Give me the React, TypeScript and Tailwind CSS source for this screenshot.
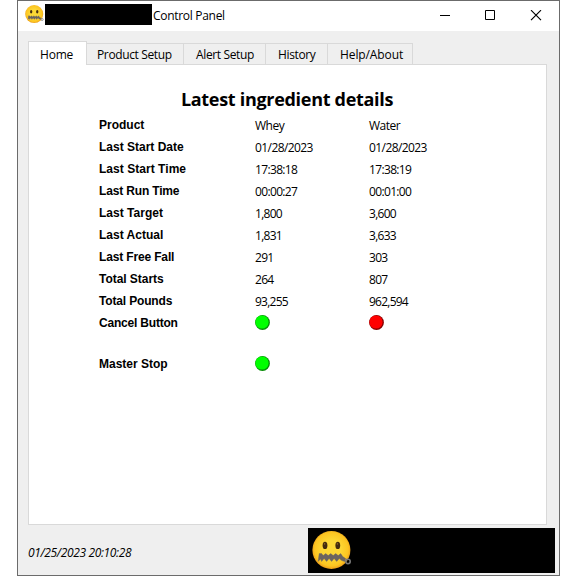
const ui = "font-['Open_Sans','Noto_Sans',sans-serif] text-[12px]";

const tabs = [
  { name: 'Product Setup', size: 'w-[97px] pl-[10px]' },
  { name: 'Alert Setup', size: 'w-[82px] pl-[12px]' },
  { name: 'History', size: 'w-[62px] pl-[12px]' },
  { name: 'Help/About', size: 'w-[85px] pl-[12px]' },
];

const rows = [
  { label: 'Product', track: 'tracking-[0px]', a: 'Whey', b: 'Water', value: 'tracking-[-0.5px]' },
  { label: 'Last Start Date', track: 'tracking-[0px]', a: '01/28/2023', b: '01/28/2023', value: 'tracking-[-0.58px]' },
  { label: 'Last Start Time', track: 'tracking-[0.04px]', a: '17:38:18', b: '17:38:19', value: 'tracking-[-0.65px]' },
  { label: 'Last Run Time', track: 'tracking-[-0.16px]', a: '00:00:27', b: '00:01:00', value: 'tracking-[-0.65px]' },
  { label: 'Last Target', track: 'tracking-[0.02px]', a: '1,800', b: '3,600', value: 'tracking-[-0.72px]' },
  { label: 'Last Actual', track: 'tracking-[0px]', a: '1,831', b: '3,633', value: 'tracking-[-0.72px]' },
  { label: 'Last Free Fall', track: 'tracking-[-0.15px]', a: '291', b: '303', value: 'tracking-[-0.7px]' },
  { label: 'Total Starts', track: 'tracking-[-0.04px]', a: '264', b: '807', value: 'tracking-[-0.7px]' },
  { label: 'Total Pounds', track: 'tracking-[-0.16px]', a: '93,255', b: '962,594', value: 'tracking-[-0.76px]' },
];

function ZipperFace({ id, className }: { id: string; className: string }) {
  return (
    <svg viewBox="0 0 40 40" className={className}>
      <defs>
        <radialGradient id={id} cx="50%" cy="48%" r="52%">
          <stop offset="0.45" stopColor="#fdd835" />
          <stop offset="0.85" stopColor="#fcc521" />
          <stop offset="1" stopColor="#eb9b18" />
        </radialGradient>
      </defs>
      <circle cx="19.4" cy="19" r="19" fill={`url(#${id})`} />
      <ellipse cx="13" cy="14.4" rx="2.4" ry="3.7" fill="#422b0d" />
      <ellipse cx="25.8" cy="14.4" rx="2.4" ry="3.7" fill="#422b0d" />
      <circle cx="12.6" cy="12.9" r="0.8" fill="#896024" />
      <circle cx="25.4" cy="12.9" r="0.8" fill="#896024" />
      <path
        d="M7 22h2.4l1.6 2 2.5-2 2.5 2 2.5-2 2.5 2 2.5-2 2.5 2 2.5-2 2 3 3 2-1 3-3-1-2.5-2-2.5 2.8-2.6-3-2.5 3-2.5-3-2.5 3-2.5-3-2.5 3-1-2.5-2.5 2.5z"
        transform="translate(.2 .6)"
        fill="#6b6460"
        stroke="#6b6460"
        strokeWidth=".4"
      />
      <circle cx="36" cy="30.5" r="2.2" fill="none" stroke="#777777" strokeWidth="1.6" />
    </svg>
  );
}

function Light({ color, dark }: { color: string; dark: string }) {
  return (
    <svg viewBox="0 0 16 16" className="block size-4">
      <circle cx="7.5" cy="7.5" r="7.4" fill={dark} />
      <circle cx="7" cy="7" r="6.6" fill={color} />
    </svg>
  );
}

export default function App() {
  return (
    <div className="h-[576px] w-[576px] overflow-hidden bg-white pl-[17px] text-black">
      <div className="flex h-[576px] w-[543px] flex-col border border-[#6b6b6b] bg-[#efefef]">
        <header className="flex h-[30px] shrink-0 items-start bg-white pl-[7px]">
          <ZipperFace id="face-small" className="mt-[4px] size-[19px]" />
          <div className="ml-[1px] mt-[3px] h-[21px] w-[107px] bg-black" />
          <span className={`${ui} ml-[1px] mt-[6px] w-[80px] whitespace-nowrap leading-[18px] tracking-[-0.3px]`}>Control Panel</span>
          <svg viewBox="0 0 102 11" className="ml-auto mr-[17px] mt-[9px] h-[11px] w-[102px]" fill="none" stroke="black">
            <path d="M0 5.5H10" />
            <path d="M45.5.5h9v9h-9z" />
            <path d="M91 .2l10 10M101 .2l-10 10" strokeWidth="1.2" />
          </svg>
        </header>

        <main className="flex grow flex-col px-[10px] pt-[10px]">
          <nav className="flex h-[23px] shrink-0 items-end">
            <div className={`${ui} relative -mb-px flex h-[24px] w-[59px] shrink-0 border border-b-0 border-[#d9d9d9] bg-white pl-[11px] pt-[4px] leading-[17px] tracking-[-0.2px]`}>
              Home
            </div>
            {tabs.map((t) => (
              <div
                key={t.name}
                className={`${ui} ${t.size} h-[21px] shrink-0 whitespace-nowrap border-r border-t border-[#d9d9d9] pt-[2px] leading-[17px] tracking-[-0.37px] last:tracking-[-0.1px]`}
              >
                {t.name}
              </div>
            ))}
          </nav>

          <section className="h-[461px] w-[519px] border border-[#d9d9d9] bg-white pt-[22px]">
            <h1 className="h-[28px] pr-px text-center font-['Open_Sans','Noto_Sans',sans-serif] text-[18px] font-bold leading-[24px] tracking-[-0.3px]">
              Latest ingredient details
            </h1>
            <div className="ml-[70px] grid w-[400px] grid-cols-[156px_114px_130px] leading-[22px]">
              {rows.map((r) => (
                <div key={r.label} className="col-span-3 grid h-[22px] grid-cols-subgrid">
                  <span className={`-mt-px font-['Liberation_Sans',Arial,sans-serif] text-[12px] font-bold ${r.track}`}>{r.label}</span>
                  <span className={`${ui} ${r.value}`}>{r.a}</span>
                  <span className={`${ui} ${r.value}`}>{r.b}</span>
                </div>
              ))}
              <span className="-mt-px h-[42px] font-['Liberation_Sans',Arial,sans-serif] text-[12px] font-bold tracking-[-0.2px]">Cancel Button</span>
              <span className="pt-[2px]"><Light color="#00ff00" dark="#078c07" /></span>
              <span className="pt-[2px]"><Light color="#ff0000" dark="#850000" /></span>
              <span className="-mt-px font-['Liberation_Sans',Arial,sans-serif] text-[12px] font-bold">Master Stop</span>
              <span className="pt-[2px]"><Light color="#00ff00" dark="#078c07" /></span>
            </div>
          </section>
        </main>

        <footer className="flex h-[50px] shrink-0 items-start justify-between pl-[10px] pr-[4px]">
          <span className={`${ui} mt-[19px] italic leading-[18px] tracking-[-0.36px]`}>01/25/2023 20:10:28</span>
          <div className="mt-[3px] h-[45px] w-[247px] bg-black pl-[4px] pt-[3px]">
            <ZipperFace id="face-large" className="size-[40px]" />
          </div>
        </footer>
      </div>
    </div>
  );
}
